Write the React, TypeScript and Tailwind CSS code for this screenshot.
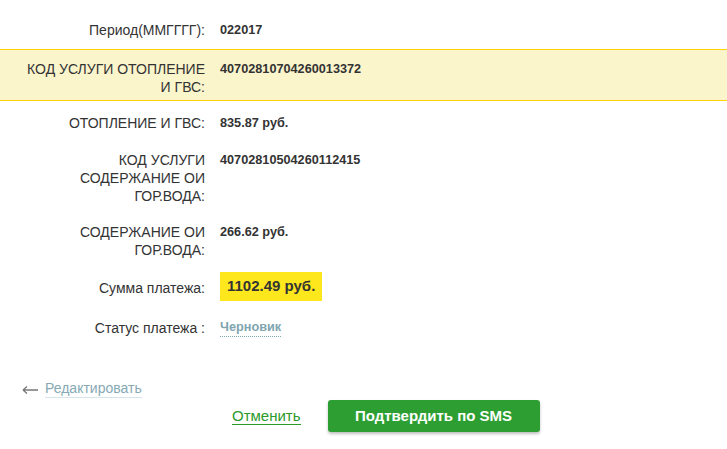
const font = { fontFamily: '"Liberation Sans", Arial, sans-serif' };

function Row({
  label,
  children,
  className = '',
}: {
  label: React.ReactNode;
  children: React.ReactNode;
  className?: string;
}) {
  return (
    <div className={`flex items-start ${className}`}>
      <div className="w-[205px] shrink-0 pl-[20px] text-right text-[14px] leading-[18px] text-[#333]">{label}</div>
      <div className="pl-[15px] text-[12.7px] font-bold leading-[18px] text-[#333]">{children}</div>
    </div>
  );
}

export default function App() {
  return (
    <div className="w-[727px] h-[449px] bg-white pt-[21px]" style={font}>
      <Row label="Период(ММГГГГ):">022017</Row>

      <div className="mt-[10px] border-y border-[#ffd200] bg-[#fbf5cc] pt-[10px] pb-[4px]">
        <Row label={<>КОД УСЛУГИ ОТОПЛЕНИЕ<br />И ГВС:</>}>40702810704260013372</Row>
      </div>

      <Row className="mt-[13px]" label="ОТОПЛЕНИЕ И ГВС:">835.87 руб.</Row>

      <Row className="mt-[19px]" label={<>КОД УСЛУГИ<br />СОДЕРЖАНИЕ ОИ<br />ГОР.ВОДА:</>}>
        40702810504260112415
      </Row>

      <Row className="mt-[18px]" label={<>СОДЕРЖАНИЕ ОИ<br />ГОР.ВОДА:</>}>266.62 руб.</Row>

      <div className="mt-[13px] flex items-center">
        <div className="w-[205px] shrink-0 pt-[2px] text-right text-[14px] leading-[18px] text-[#333]">Сумма платежа:</div>
        <div className="ml-[15px] flex h-[29px] items-center bg-[#fee71d] px-[7px] text-[15px] font-bold text-[#333]">
          1102.49 руб.
        </div>
      </div>

      <div className="mt-[18px] flex items-start">
        <div className="w-[205px] shrink-0 text-right text-[14px] leading-[18px] text-[#333]">Статус платежа :</div>
        <div className="ml-[15px] text-[12.7px] font-bold leading-[17px] text-[#7fa5b0] border-b border-dotted border-[#7fa5b0]">
          Черновик
        </div>
      </div>

      <div className="mt-[43px] flex items-center pl-[22px]">
        <svg width="16" height="10" viewBox="0 0 16 10" className="mt-[2px]">
          <path d="M1 5H16M1 5L5 1.5M1 5L5 8.5" stroke="#777" strokeWidth="1.3" fill="none" />
        </svg>
        <span className="ml-[7px] border-b border-[#d6e4e8] text-[14px] leading-[17px] text-[#86a9b4]">
          Редактировать
        </span>
      </div>

      <div className="mt-[2px] flex items-center pl-[232px]">
        <span className="border-b border-[#2b9a2b] text-[15px] leading-[17px] text-[#2b9a2b]">Отменить</span>
        <button className="ml-[27px] h-[32px] w-[212px] rounded-[3px] bg-[#2d9f32] text-[15px] font-bold text-white shadow-[0_2px_3px_rgba(0,0,0,0.25)]">
          Подтвердить по SMS
        </button>
      </div>
    </div>
  );
}
